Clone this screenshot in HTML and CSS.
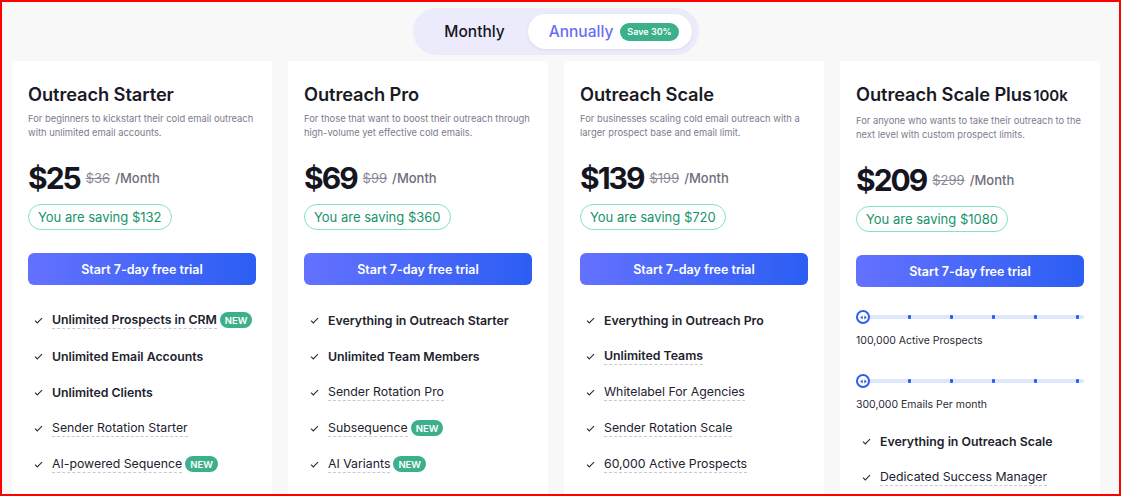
FILE: index.html
```html
<!DOCTYPE html>
<html lang="en">
<head>
<meta charset="utf-8">
<title>Pricing</title>
<link rel="stylesheet" href="styles.css">
</head>
<body>
<div class="frame">
  <div class="toggle-row">
    <div class="toggle">
      <span class="opt">Monthly</span>
      <span class="opt active">Annually <span class="save">Save 30%</span></span>
    </div>
  </div>
  <div class="cards">
    <div class="card">
      <h2 class="title">Outreach Starter</h2>
      <p class="desc">For beginners to kickstart their cold email outreach with unlimited email accounts.</p>
      <div class="price"><span class="amt">$25</span><span class="old">$36</span><span class="per">/Month</span></div>
      <div class="saving">You are saving $132</div>
      <a class="cta">Start 7-day free trial</a>
      <ul class="feats">
        <li><svg class="chk" viewBox="0 0 10 8"><polyline points="1,4.2 3.6,6.8 9,1.2"/></svg><span class="b u">Unlimited Prospects in CRM</span><span class="new">NEW</span></li>
        <li><svg class="chk" viewBox="0 0 10 8"><polyline points="1,4.2 3.6,6.8 9,1.2"/></svg><span class="b">Unlimited Email Accounts</span></li>
        <li><svg class="chk" viewBox="0 0 10 8"><polyline points="1,4.2 3.6,6.8 9,1.2"/></svg><span class="b">Unlimited Clients</span></li>
        <li><svg class="chk" viewBox="0 0 10 8"><polyline points="1,4.2 3.6,6.8 9,1.2"/></svg><span class="u">Sender Rotation Starter</span></li>
        <li><svg class="chk" viewBox="0 0 10 8"><polyline points="1,4.2 3.6,6.8 9,1.2"/></svg><span class="u">AI-powered Sequence</span><span class="new">NEW</span></li>
      </ul>
    </div>
    <div class="card">
      <h2 class="title">Outreach Pro</h2>
      <p class="desc">For those that want to boost their outreach through high-volume yet effective cold emails.</p>
      <div class="price"><span class="amt">$69</span><span class="old">$99</span><span class="per">/Month</span></div>
      <div class="saving">You are saving $360</div>
      <a class="cta">Start 7-day free trial</a>
      <ul class="feats">
        <li><svg class="chk" viewBox="0 0 10 8"><polyline points="1,4.2 3.6,6.8 9,1.2"/></svg><span class="b">Everything in Outreach Starter</span></li>
        <li><svg class="chk" viewBox="0 0 10 8"><polyline points="1,4.2 3.6,6.8 9,1.2"/></svg><span class="b">Unlimited Team Members</span></li>
        <li><svg class="chk" viewBox="0 0 10 8"><polyline points="1,4.2 3.6,6.8 9,1.2"/></svg><span class="u">Sender Rotation Pro</span></li>
        <li><svg class="chk" viewBox="0 0 10 8"><polyline points="1,4.2 3.6,6.8 9,1.2"/></svg><span class="u">Subsequence</span><span class="new">NEW</span></li>
        <li><svg class="chk" viewBox="0 0 10 8"><polyline points="1,4.2 3.6,6.8 9,1.2"/></svg><span class="u">AI Variants</span><span class="new">NEW</span></li>
      </ul>
    </div>
    <div class="card">
      <h2 class="title">Outreach Scale</h2>
      <p class="desc">For businesses scaling cold email outreach with a larger prospect base and email limit.</p>
      <div class="price"><span class="amt">$139</span><span class="old">$199</span><span class="per">/Month</span></div>
      <div class="saving">You are saving $720</div>
      <a class="cta">Start 7-day free trial</a>
      <ul class="feats">
        <li><svg class="chk" viewBox="0 0 10 8"><polyline points="1,4.2 3.6,6.8 9,1.2"/></svg><span class="b">Everything in Outreach Pro</span></li>
        <li><svg class="chk" viewBox="0 0 10 8"><polyline points="1,4.2 3.6,6.8 9,1.2"/></svg><span class="b u">Unlimited Teams</span></li>
        <li><svg class="chk" viewBox="0 0 10 8"><polyline points="1,4.2 3.6,6.8 9,1.2"/></svg><span class="u">Whitelabel For Agencies</span></li>
        <li><svg class="chk" viewBox="0 0 10 8"><polyline points="1,4.2 3.6,6.8 9,1.2"/></svg><span class="u">Sender Rotation Scale</span></li>
        <li><svg class="chk" viewBox="0 0 10 8"><polyline points="1,4.2 3.6,6.8 9,1.2"/></svg><span class="u">60,000 Active Prospects</span></li>
      </ul>
    </div>
    <div class="card plus">
      <h2 class="title">Outreach Scale Plus <span class="tier">100k</span></h2>
      <p class="desc">For anyone who wants to take their outreach to the next level with custom prospect limits.</p>
      <div class="price"><span class="amt">$209</span><span class="old">$299</span><span class="per">/Month</span></div>
      <div class="saving">You are saving $1080</div>
      <a class="cta">Start 7-day free trial</a>
      <div class="slider">
        <span class="knob"><svg viewBox="0 0 8 6"><polygon points="0,3 3,0.5 3,5.5"/><polygon points="8,3 5,0.5 5,5.5"/></svg></span>
        <span class="dot"></span><span class="dot"></span><span class="dot"></span><span class="dot"></span><span class="dot"></span>
      </div>
      <div class="slabel">100,000 Active Prospects</div>
      <div class="slider">
        <span class="knob"><svg viewBox="0 0 8 6"><polygon points="0,3 3,0.5 3,5.5"/><polygon points="8,3 5,0.5 5,5.5"/></svg></span>
        <span class="dot"></span><span class="dot"></span><span class="dot"></span><span class="dot"></span><span class="dot"></span>
      </div>
      <div class="slabel">300,000 Emails Per month</div>
      <ul class="feats">
        <li><svg class="chk" viewBox="0 0 10 8"><polyline points="1,4.2 3.6,6.8 9,1.2"/></svg><span class="b">Everything in Outreach Scale</span></li>
        <li><svg class="chk" viewBox="0 0 10 8"><polyline points="1,4.2 3.6,6.8 9,1.2"/></svg><span class="u">Dedicated Success Manager</span></li>
      </ul>
    </div>
  </div>
</div>
</body>
</html>
```

FILE: styles.css
```css
* { box-sizing: border-box; }
html, body { margin: 0; padding: 0; }
body {
  font-family: Inter, "Noto Sans", "Liberation Sans", sans-serif;
  color: #1c1c28;
  background: #fff;
}
.frame {
  width: 1121px;
  height: 496px;
  border: 2px solid #ff0000;
  background: #f8f8f8;
  overflow: hidden;
  padding: 6px 19px 0 10px;
}
.toggle-row {
  display: flex;
  justify-content: center;
}
.toggle {
  display: flex;
  align-items: center;
  background: #ebebfb;
  border-radius: 24px;
  height: 47px;
  padding: 0 7px 0 8px;
}
.opt {
  display: flex;
  align-items: center;
  font-size: 15.5px;
  font-weight: 500;
  color: #14141f;
  padding: 0 23px 0 23px;
  height: 35px;
}
.opt.active {
  background: #fff;
  border-radius: 18px;
  color: #6b6cf5;
  padding: 0 13px 0 21px;
  box-shadow: 0 1px 3px rgba(90, 90, 180, 0.12);
}
.save {
  margin-left: 7px;
  background: #3cb08a;
  color: #fff;
  font-size: 9px;
  font-weight: 600;
  border-radius: 9px;
  height: 18px;
  display: inline-flex;
  align-items: center;
  padding: 0 7px;
}
.cards {
  display: flex;
  gap: 16px;
  margin-top: 6px;
}
.card {
  width: 260px;
  flex: none;
  background: #fff;
  padding: 21px 16px 0 16px;
  height: 460px;
}
.title {
  margin: 0;
  font-size: 18.3px;
  line-height: 24px;
  font-weight: 600;
  color: #1a1a26;
  letter-spacing: -0.1px;
  white-space: nowrap;
}
.tier {
  font-size: 15px;
  font-weight: 600;
  margin-left: -3px;
}
.desc {
  margin: 6px 0 0 0;
  font-size: 9.4px;
  line-height: 14px;
  color: #7c7c8c;
}
.price {
  display: flex;
  align-items: center;
  margin-top: 20px;
  height: 36px;
}
.amt {
  font-size: 30px;
  line-height: 36px;
  font-weight: 700;
  color: #15151f;
  letter-spacing: -2px;
}
.old {
  font-size: 13px;
  color: #8a8a96;
  text-decoration: line-through;
  margin-left: 6px;
}
.per {
  font-size: 13px;
  font-weight: 500;
  color: #6e6e7a;
  margin-left: 5px;
}
.saving {
  display: inline-flex;
  align-items: center;
  margin-top: 8px;
  height: 26px;
  padding: 0 9px;
  border: 1px solid #84e2bd;
  border-radius: 13px;
  color: #16936a;
  font-size: 13px;
  font-weight: 400;
}
.cta {
  display: flex;
  align-items: center;
  justify-content: center;
  margin-top: 23px;
  height: 32px;
  border-radius: 6px;
  background: linear-gradient(90deg, #6471ff 0%, #2c5ef3 100%);
  color: #fff;
  font-size: 12.5px;
  font-weight: 600;
}
.feats {
  list-style: none;
  margin: 17px 0 0 0;
  padding: 0;
}
.plus .feats { margin-top: 10px; }
.feats li {
  display: flex;
  align-items: center;
  height: 36px;
  padding-left: 6px;
  font-size: 12.3px;
  color: #22222e;
  white-space: nowrap;
}
.chk {
  width: 9px;
  height: 7px;
  margin-right: 9px;
  flex: none;
}
.chk polyline {
  fill: none;
  stroke: #2a2a35;
  stroke-width: 1.2;
}
.b { font-weight: 600; }
.u {
  border-bottom: 1px dashed #c8c8d0;
  line-height: 16px;
}
.new {
  margin-left: 3px;
  background: #3cb08a;
  color: #fff;
  font-size: 9.5px;
  font-weight: 600;
  height: 16px;
  border-radius: 8px;
  padding: 0 5px;
  display: inline-flex;
  align-items: center;
}
.slider {
  position: relative;
  display: flex;
  align-items: center;
  justify-content: space-between;
  height: 14px;
  margin-top: 23px;
  padding-left: 14px;
}
.slider::before {
  content: "";
  position: absolute;
  left: 0;
  right: 0;
  top: 5px;
  height: 4px;
  border-radius: 2px;
  background: #dde8fe;
}
.slider + .slabel + .slider { margin-top: 25px; }
.knob {
  position: absolute;
  left: 0;
  top: 0;
  width: 14px;
  height: 14px;
  border-radius: 50%;
  border: 2px solid #2d5ff2;
  background: #fff;
  display: flex;
  align-items: center;
  justify-content: center;
}
.knob svg { width: 7px; height: 5px; fill: #2d5ff2; }
.dot {
  position: relative;
  width: 3px;
  height: 4px;
  border-radius: 1px;
  background: #2d5ff2;
  margin-left: 38px;
}
.dot:last-child { margin-right: 5px; }
.slabel {
  margin-top: 9px;
  font-size: 10.5px;
  line-height: 16px;
  color: #2a2a35;
}
```
